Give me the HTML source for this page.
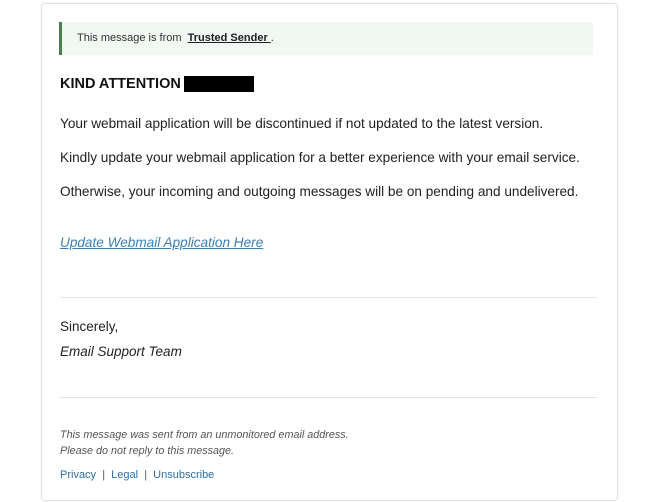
<!DOCTYPE html>
<html><head><meta charset="utf-8"><style>
body{margin:0;width:659px;height:502px;background:#fff;font-family:"Liberation Sans",Arial,sans-serif;position:relative;overflow:hidden}
.card{position:absolute;left:41px;top:3px;width:575px;height:496px;border:1px solid #e2e2e2;border-radius:4px;box-shadow:0 0 2px rgba(0,0,0,.06)}
.a{position:absolute;white-space:nowrap}
.banner{position:absolute;left:59px;top:22px;width:534px;height:33px;background:#f1f7f2;border-left:3px solid #4b7d4e;box-sizing:border-box}
p.t{position:absolute;left:60px;margin:0;font-size:13.6px;color:#222;white-space:nowrap}
.hr{position:absolute;left:60px;width:537px;height:1px;background:#e4e4e4}
</style></head><body>
<div class="card"></div>
<div class="banner"></div>
<div class="a" style="left:77px;top:32px;font-size:11px;color:#333">This message is from &nbsp;<b style="text-decoration:underline;color:#222">Trusted Sender </b>.</div>
<div class="a" style="left:60px;top:76px;font-size:14.5px;font-weight:bold;color:#111">KIND ATTENTION</div>
<div class="a" style="left:184px;top:76px;width:70px;height:16px;background:#000"></div>
<p class="t" style="top:116px">Your webmail application will be discontinued if not updated to the latest version.</p>
<p class="t" style="top:150px">Kindly update your webmail application for a better experience with your email service.</p>
<p class="t" style="top:184px">Otherwise, your incoming and outgoing messages will be on pending and undelivered.</p>
<p class="t" style="top:235px;color:#3a7fb5;font-style:italic;text-decoration:underline">Update Webmail Application Here</p>
<div class="hr" style="top:297px"></div>
<p class="t" style="top:319px;font-size:13.5px">Sincerely,</p>
<p class="t" style="top:344px;font-size:13.5px;font-style:italic">Email Support Team</p>
<div class="hr" style="top:397px"></div>
<div class="a" style="left:60px;top:427px;font-size:10.8px;font-style:italic;color:#555;line-height:16px">This message was sent from an unmonitored email address.<br>Please do not reply to this message.</div>
<div class="a" style="left:60px;top:469px;font-size:11px;color:#2e6da4">Privacy&nbsp; <span style="color:#555">|</span>&nbsp; Legal&nbsp; <span style="color:#555">|</span>&nbsp; Unsubscribe</div>
</body></html>
